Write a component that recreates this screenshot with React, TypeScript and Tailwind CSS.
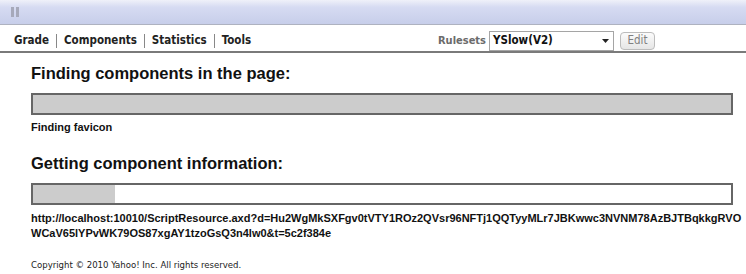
export default function App() {
  const url1 =
    "http://localhost:10010/ScriptResource.axd?d=Hu2WgMkSXFgv0tVTY1ROz2QVsr96NFTj1QQTyyMLr7JBKwwc3NVNM78AzBJTBqkkgRVO";
  const url2 = "WCaV65lYPvWK79OS87xgAY1tzoGsQ3n4lw0&t=5c2f384e";
  const tahoma = { fontFamily: '"DejaVu Sans Condensed", "DejaVu Sans", sans-serif' };
  return (
    <div className="w-[746px] h-[274px] bg-white overflow-hidden">
      {/* top toolbar */}
      <div className="h-[25px] border-b border-[#aeb2c0] bg-[linear-gradient(to_bottom,#eff1f9_0%,#d6dbf2_30%,#c7ceea_100%)] flex items-start pt-[7px] pl-[11px] gap-[2px]">
        <div className="w-[3px] h-[10px] bg-[#a6a9ba]" />
        <div className="w-[3px] h-[10px] bg-[#a6a9ba]" />
      </div>
      {/* nav */}
      <div className="h-[28px] pt-[6px] border-b-2 border-[#7a7a7a] flex items-center pl-[14px]">
        <div className="flex items-center text-[11.5px] font-bold text-[#222]" style={tahoma}>
          <span>Grade</span>
          <span className="mx-[7px] w-px h-[14px] bg-[#888]" />
          <span>Components</span>
          <span className="mx-[7px] w-px h-[14px] bg-[#888]" />
          <span>Statistics</span>
          <span className="mx-[7px] w-px h-[14px] bg-[#888]" />
          <span>Tools</span>
        </div>
        <div className="ml-auto mr-[91px] flex items-center" style={tahoma}>
          <span className="text-[11px] font-bold text-[#6b6b6b]">Rulesets</span>
          <div className="ml-[3px] w-[125px] h-[20px] border border-[#a5a5a5] bg-white flex items-center pl-[3px] text-[11.5px] font-bold text-[#111]">
            <span>YSlow(V2)</span>
            <svg className="ml-auto mr-[4px]" width="7" height="4" viewBox="0 0 7 4">
              <path d="M0 0 L7 0 L3.5 4 Z" fill="#222" />
            </svg>
          </div>
          <div className="ml-[6px] w-[35px] h-[18px] rounded-[4px] border border-[#bcbcbc] bg-gradient-to-b from-[#fbfbfb] to-[#e6e6e6] flex items-center justify-center text-[11.5px] text-[#808080]">
            Edit
          </div>
        </div>
      </div>
      {/* content */}
      <div className="pl-[31px] pr-[13px]" style={{ fontFamily: '"Liberation Sans", Arial, sans-serif' }}>
        <div className="mt-[10px] text-[16.5px] font-bold text-[#111] leading-[20px]">Finding components in the page:</div>
        <div className="mt-[10px] h-[22px] border-2 border-[#666] bg-[#cccccc]" />
        <div className="mt-[6px] text-[11px] font-bold text-[#111] leading-[13px]">Finding favicon</div>
        <div className="mt-[19px] text-[16.5px] font-bold text-[#111] leading-[20px]">Getting component information:</div>
        <div className="mt-[10px] h-[22px] border-2 border-[#666] bg-white">
          <div className="h-full w-[82px] bg-[#cccccc]" />
        </div>
        <div className="mt-[6px] text-[11px] font-bold text-[#111] leading-[15px] whitespace-nowrap">
          <div>{url1}</div>
          <div>{url2}</div>
        </div>
        <div className="mt-[18px] text-[9.5px] leading-[12px] text-[#222]" style={tahoma}>
          Copyright © 2010 Yahoo! Inc. All rights reserved.
        </div>
      </div>
    </div>
  );
}
